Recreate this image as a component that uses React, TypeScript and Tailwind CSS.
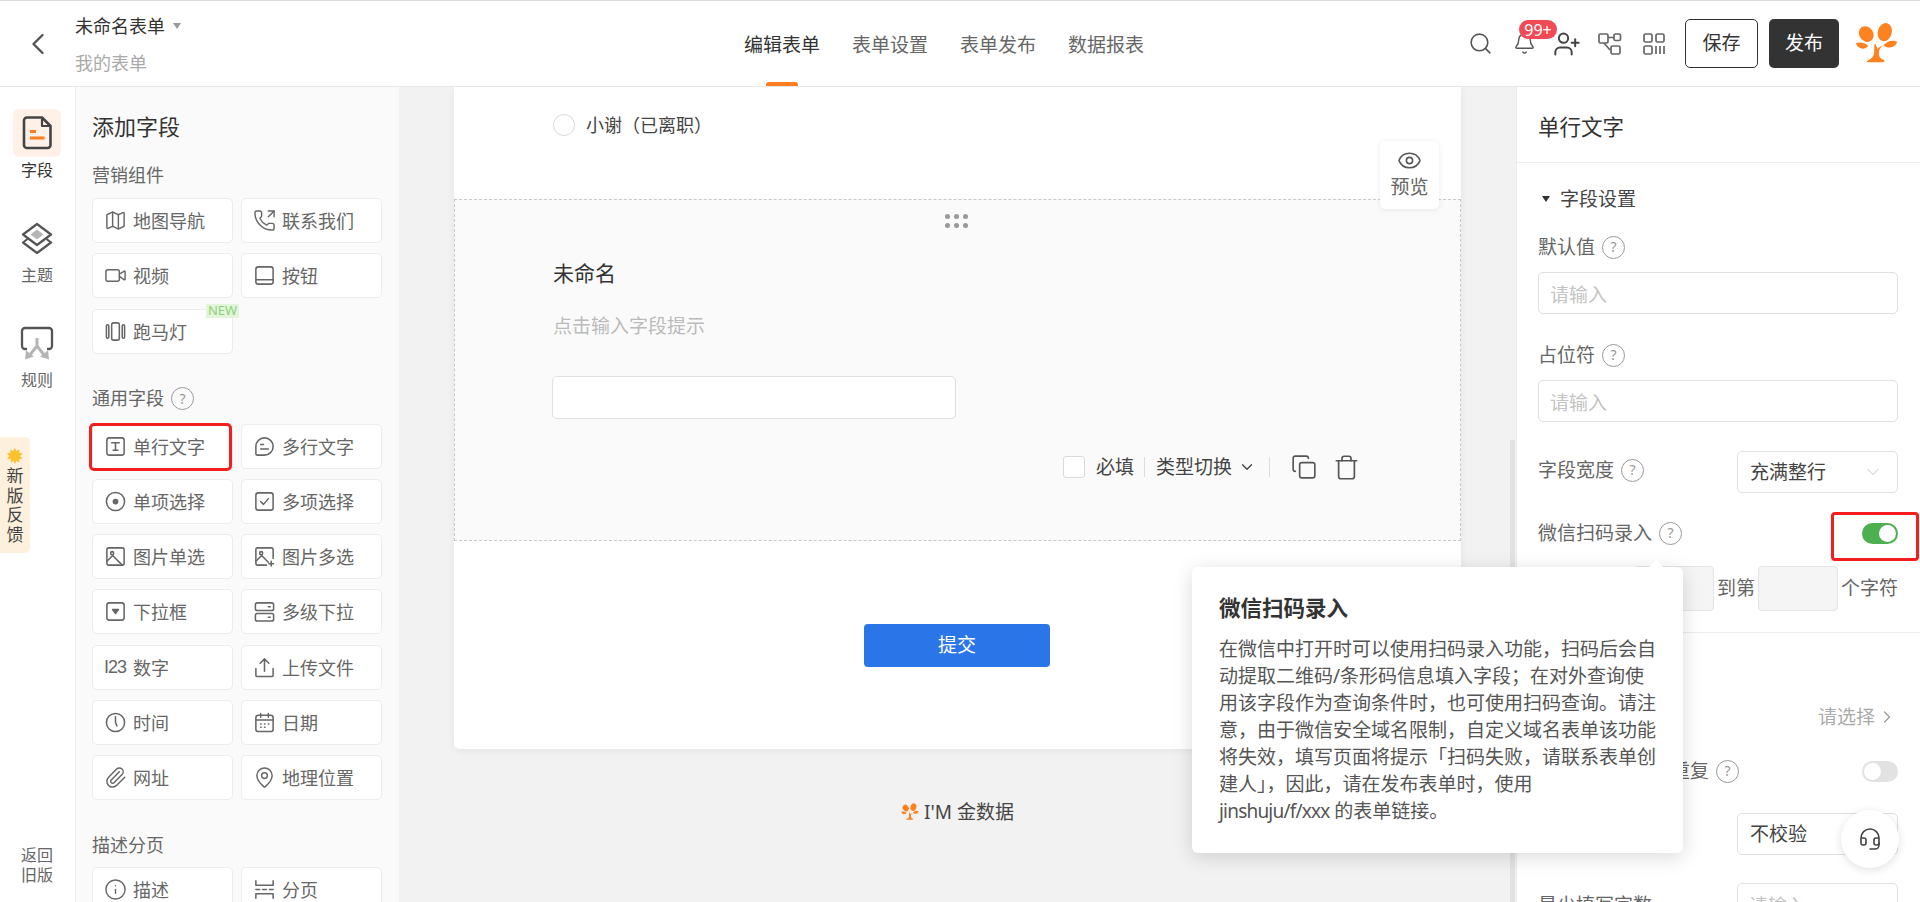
import React from 'react';
import { Bell, ChevronDown, ChevronLeft, ChevronRight, Eye, Headset, Info, Map, MapPin, Paperclip, PhoneOutgoing, Search, UserPlus, Video, Copy, Trash } from 'lucide-react';

function Ic({ children, size = 23, sw = 1.6, color = '#666' }: { children: React.ReactNode; size?: number; sw?: number; color?: string }) {
    return (
        <svg width={size} height={size} viewBox="0 0 24 24" fill="none" stroke={color} strokeWidth={sw} strokeLinecap="round" strokeLinejoin="round" className="shrink-0">
            {children}
        </svg>
    );
}

const lu = { size: 23, strokeWidth: 1.5, color: '#666', className: 'shrink-0' };

const marketing = [
    { label: '地图导航', icon: <Map {...lu} /> },
    { label: '联系我们', icon: <PhoneOutgoing {...lu} /> },
    { label: '视频', icon: <Video {...lu} /> },
    { label: '按钮', icon: <Ic><rect x="3" y="3" width="18" height="18" rx="2.5" /><path d="M3 16.5h18" /></Ic> },
    { label: '跑马灯', icon: <Ic><rect x="8" y="3" width="8" height="18" rx="2" /><rect x="2.5" y="5" width="2.5" height="14" rx="1.2" /><rect x="19" y="5" width="2.5" height="14" rx="1.2" /></Ic>, isNew: true },
];

const common = [
    { label: '单行文字', selected: true, icon: <Ic><rect x="3" y="3" width="18" height="18" rx="2.5" /><path d="M8 8h8M12 8v8M9.5 16h5" /></Ic> },
    { label: '多行文字', icon: <Ic><path d="M12 3a9 9 0 1 1 0 18H4.5A1.5 1.5 0 0 1 3 19.5V12a9 9 0 0 1 9-9z" /><path d="M8 10h3M8 14.5h8" /></Ic> },
    { label: '单项选择', icon: <Ic><circle cx="12" cy="12" r="9.5" /><circle cx="12" cy="12" r="3" fill="#666" stroke="none" /></Ic> },
    { label: '多项选择', icon: <Ic><rect x="3" y="3" width="18" height="18" rx="2.5" /><path d="M8 12l3 3 5-6" /></Ic> },
    { label: '图片单选', icon: <Ic><rect x="3" y="3" width="18" height="18" rx="2" /><circle cx="8.5" cy="8.5" r="1.6" /><path d="M3 17l6-6 10 10" /></Ic> },
    { label: '图片多选', icon: <Ic><path d="M14 21H5a2 2 0 0 1-2-2V5a2 2 0 0 1 2-2h14a2 2 0 0 1 2 2v9" /><circle cx="8.5" cy="8.5" r="1.6" /><path d="M3 17l6-6 7 7M19 17v5M16.500 19.500h5" /></Ic> },
    { label: '下拉框', icon: <Ic><rect x="3" y="3" width="18" height="18" rx="2.5" /><path d="M9 10h6l-3 4z" fill="#666" /></Ic> },
    { label: '多级下拉', icon: <Ic><rect x="2.500" y="3" width="19" height="8" rx="2" /><rect x="2.500" y="14" width="19" height="8" rx="2" /><path d="M16 7h2M16 18h2" /></Ic> },
    { label: '数字', icon: <span className="w-[23px] shrink-0 text-[18px] leading-none tracking-[-1px] text-[#666] font-['Liberation_Sans',sans-serif]">I23</span> },
    { label: '上传文件', icon: <Ic><path d="M12 16V3M7.500 7.500L12 3l4.500 4.500M3 13v7a1.500 1.500 0 0 0 1.500 1.500h15A1.500 1.500 0 0 0 21 20v-7" /></Ic> },
    { label: '时间', icon: <Ic><circle cx="12" cy="12" r="9.500" /><path d="M12 6v6l1.500 3.500" /></Ic> },
    { label: '日期', icon: <Ic><rect x="3" y="4.500" width="18" height="17" rx="2.500" /><path d="M3 9.500h18M8 2.500v4M16 2.500v4M8 13.500h.5M12 13.500h.5M16 13.500h.5M8 17h.5M12 17h.5" /></Ic> },
    { label: '网址', icon: <Paperclip {...lu} /> },
    { label: '地理位置', icon: <MapPin {...lu} /> },
];

const layout = [
    { label: '描述', icon: <Info {...lu} /> },
    { label: '分页', icon: <Ic><path d="M3 3v4.500h18V3M3 12h4M10 12h4M17 12h4M3 21v-4.500h18V21" /></Ic> },
];

const popLines = [
    '在微信中打开时可以使用扫码录入功能，扫码后会自',
    '动提取二维码/条形码信息填入字段；在对外查询使',
    '用该字段作为查询条件时，也可使用扫码查询。请注',
    '意，由于微信安全域名限制，自定义域名表单该功能',
    '将失效，填写页面将提示「扫码失败，请联系表单创',
    '建人」，因此，请在发布表单时，使用',
];

function FieldButton({ item }: { item: any }) {
    return (
        <div className="relative flex h-[45px] w-[141px] items-center gap-[6px] rounded-[5px] border border-[#ececec] bg-white pl-[11px] text-[18px] text-[#666]">
            {item.icon}
            <span className="whitespace-nowrap pt-[2px]">{item.label}</span>
            {item.isNew && <span className="absolute right-[-7px] top-[-6px] flex h-[14px] w-[33px] items-center justify-center bg-[#e3f6dc] text-[13px] text-[#8ed07a]">NEW</span>}
            {item.selected && <span className="absolute left-[-4px] top-[-2px] h-[48px] w-[143px] rounded-[5px] border-[3px] border-[#f51e1e]" />}
        </div>
    );
}

function FieldGrid({ items, className }: { items: any[]; className: string }) {
    return (
        <div className={`grid grid-cols-[141px_141px] gap-x-[8px] gap-y-[10.3px] ${className}`}>
            {items.map(item => <FieldButton key={item.label} item={item} />)}
        </div>
    );
}

function Help() {
    return <span className="flex h-[23px] w-[23px] shrink-0 items-center justify-center rounded-full border-[1.5px] border-[#999] text-[14px] leading-none text-[#999]">?</span>;
}

function Label({ text, className = '' }: { text: string; className?: string }) {
    return (
        <div className={`flex h-[26px] items-center gap-[7px] text-[19px] text-[#666] ${className}`}>
            <span className="whitespace-nowrap">{text}</span>
            <Help />
        </div>
    );
}

function TextInput({ className = '' }: { className?: string }) {
    return <input readOnly placeholder="请输入" className={`block h-[42px] w-full rounded-[5px] border border-[#e0e0e0] bg-white px-[11px] pt-[3px] text-[19px] outline-none placeholder:text-[#c4c4c4] ${className}`} />;
}

function Toggle({ on }: { on?: boolean }) {
    return (
        <span className={`flex h-[21px] w-[36px] items-center rounded-full px-[2px] ${on ? 'justify-end bg-[#4caf50]' : 'justify-start bg-[#e2e2e2]'}`}>
            <span className="h-[17px] w-[17px] rounded-full bg-white" />
        </span>
    );
}

function RailItem({ label, active, children }: { label: string; active?: boolean; children: React.ReactNode }) {
    return (
        <div className="flex h-[105px] w-full flex-col items-center">
            <div className={`flex h-[48px] w-[48px] items-center justify-center rounded-[6px] ${active ? 'bg-[#fff1e8]' : ''}`}>{children}</div>
            <div className={`mt-[3px] text-[16px] leading-[20px] ${active ? 'text-[#333]' : 'text-[#666]'}`}>{label}</div>
        </div>
    );
}

function Logo({ size }: { size: number }) {
    return (
        <svg width={size} height={size} viewBox="0 0 130 125" fill="#ff8220" className="shrink-0">
            <ellipse cx="34" cy="34" rx="21" ry="25" transform="rotate(-35 34 34)" />
            <ellipse cx="90" cy="28" rx="21" ry="28" transform="rotate(15 90 28)" />
            <path d="M2 62c14-6 30-2 38 8-12 14-30 10-38-8z" />
            <path d="M128 58c-12-8-32-4-42 10 14 12 34 8 42-10z" />
            <path d="M60 62c6 10 8 14 8 18 4-6 8-8 16-12-8 8-12 14-12 24 0 10 4 16 14 20 4 2 4 7-2 7H40c-6 0-6-4 0-6 12-4 18-14 18-26 0-10 0-16 2-25z" />
        </svg>
    );
}

export default function App() {
    return (
        <div className="relative flex h-screen w-full flex-col overflow-hidden bg-white font-['Noto_Sans','Noto_Sans_CJK_SC',sans-serif] text-[#333]">
            {/* Header */}
            <header className="flex h-[87px] shrink-0 items-center border-t border-b border-t-[#dcdcdc] border-b-[#e8e8e8] bg-white">
                <div className="flex w-[744px] items-center">
                    <ChevronLeft size={36} strokeWidth={1.6} color="#555" className="ml-[20px]" />
                    <div className="ml-[19px] pt-[2px]">
                        <div className="flex h-[36px] items-center text-[18px] text-[#333]">
                            未命名表单
                            <span className="ml-[8px] mb-[1px] h-0 w-0 border-x-[4px] border-t-[6px] border-x-transparent border-t-[#999]" />
                        </div>
                        <div className="h-[36px] text-[18px] leading-[36px] text-[#aaa]">我的表单</div>
                    </div>
                </div>
                <nav className="flex h-full items-center gap-[32px] pt-[4px] text-[19px] text-[#666]">
                    <div className="relative flex h-full items-center text-[#333]">
                        编辑表单
                        <span className="absolute bottom-0 left-[22px] h-[4px] w-[32px] rounded-t-[3px] bg-[#ff7d1f]" />
                    </div>
                    <div>表单设置</div>
                    <div>表单发布</div>
                    <div>数据报表</div>
                </nav>
                <div className="ml-auto flex items-center pr-[22px]">
                    <Search size={25} strokeWidth={1.5} color="#555" />
                    <div className="relative ml-[20px]">
                        <Bell size={23} strokeWidth={1.5} color="#555" />
                        <span className="absolute left-[6px] top-[-12px] flex h-[19px] w-[38px] items-center justify-center rounded-full bg-[#f04a55] text-[16px] leading-none text-white">99+</span>
                    </div>
                    <UserPlus size={28} strokeWidth={1.7} color="#444" className="ml-[17px]" />
                    <svg width="24" height="24" viewBox="0 0 24 24" fill="none" stroke="#666" strokeWidth="1.7" strokeLinejoin="round" className="ml-[17px]">
                        <rect x="1" y="2" width="9" height="9" rx="1.5" />
                        <rect x="16" y="2" width="6.5" height="6.5" rx="1.5" />
                        <rect x="13" y="14" width="9" height="8" rx="1.5" />
                        <path d="M6 11l6 7M10 5.5h6" />
                    </svg>
                    <svg width="22" height="22" viewBox="0 0 22 22" fill="none" stroke="#666" strokeWidth="1.7" className="ml-[21px]">
                        <rect x="1" y="1" width="8" height="8" rx="1.5" />
                        <rect x="13" y="1" width="8" height="8" rx="1.5" />
                        <rect x="1" y="13" width="8" height="8" rx="1.5" />
                        <path d="M13 13v8M17 13v8M21 13v8" />
                    </svg>
                    <button className="ml-[20px] flex h-[49px] w-[73px] items-center justify-center rounded-[5px] border border-[#333] bg-white text-[19px] text-[#333]">保存</button>
                    <button className="ml-[11px] flex h-[49px] w-[70px] items-center justify-center rounded-[5px] bg-[#333] text-[19px] text-white">发布</button>
                    <div className="ml-[16px]"><Logo size={43} /></div>
                </div>
            </header>

            <div className="flex min-h-0 flex-1">
                {/* Left rail */}
                <aside className="relative flex w-[76px] shrink-0 flex-col items-center border-r border-[#ececec] bg-white pr-[1px] pt-[22px]">
                    <RailItem label="字段" active>
                        <svg width="30" height="34" viewBox="0 0 30 34" fill="none">
                            <path d="M5 1.500h15l8.500 8.500v19a3 3 0 0 1-3 3H5a3 3 0 0 1-3-3V4.500a3 3 0 0 1 3-3z" stroke="#444" strokeWidth="2.6" strokeLinejoin="round" />
                            <path d="M20 1.500v8.500h8.500" stroke="#444" strokeWidth="2.200" strokeLinejoin="round" />
                            <path d="M8 14h6v3H8zM8 20.500h14.500v3H8z" fill="#ff7d1f" />
                        </svg>
                    </RailItem>
                    <RailItem label="主题">
                        <svg width="32" height="32" viewBox="0 0 32 32" fill="none">
                            <path d="M16 7.500l6.500 5-6.500 5-6.500-5z" fill="#b5b5b5" />
                            <path d="M16 2L30 12.500 16 23 2 12.500z" stroke="#555" strokeWidth="2.200" strokeLinejoin="round" />
                            <path d="M6.500 17L2 20.500 16 31l14-10.500L25.500 17" stroke="#555" strokeWidth="2.200" strokeLinejoin="round" />
                        </svg>
                    </RailItem>
                    <RailItem label="规则">
                        <svg width="34" height="34" viewBox="0 0 34 34" fill="none">
                            <path d="M7 23H5a3 3 0 0 1-3-3V5a3 3 0 0 1 3-3h24a3 3 0 0 1 3 3v15a3 3 0 0 1-3 3h-2" stroke="#555" strokeWidth="2.300" />
                            <path d="M17 12v10M17 20L9 30M17 20l8 10" stroke="#b5b5b5" strokeWidth="3" />
                            <path d="M5 33.500l1-9 8 6zM29 33.500l-1-9-8 6z" fill="#b5b5b5" />
                        </svg>
                    </RailItem>
                    <div className="mt-auto pb-[17px] text-center text-[16px] leading-[20px] text-[#666]">返回<br />旧版</div>
                    <div className="absolute left-0 top-[350px] flex h-[116px] w-[30px] flex-col items-center rounded-r-[5px] bg-[#fdf1dd] pt-[11px] text-[17px] leading-[19.5px] text-[#444]">
                        <svg width="16" height="16" viewBox="0 0 16 16" className="mb-[2px] shrink-0">
                            <path d="M8 0l1.500 3 3-1.500-.5 3.300 3.500.7-2.500 2.500 2.500 2.500-3.500.7.5 3.300-3-1.500L8 16l-1.500-3-3 1.500.5-3.300L0 10.500l2.500-2.500L0 5.500l3.500-.7L3 1.500l3 1.500z" fill="#fbc02d" />
                        </svg>
                        <span>新</span><span>版</span><span>反</span><span>馈</span>
                    </div>
                </aside>

                {/* Field list */}
                <aside className="w-[323px] shrink-0 overflow-hidden bg-[#fafafa] pl-[16px] pt-[24px]">
                    <h2 className="h-[30px] text-[22px] leading-[30px] text-[#333]">添加字段</h2>
                    <div className="mt-[21px] h-[26px] text-[18px] leading-[26px] text-[#666]">营销组件</div>
                    <FieldGrid items={marketing} className="mt-[10px]" />
                    <div className="mt-[32px] flex h-[26px] items-center gap-[7px] text-[18px] text-[#666]">通用字段 <Help /></div>
                    <FieldGrid items={common} className="mt-[12px]" />
                    <div className="mt-[32px] h-[26px] text-[18px] leading-[26px] text-[#666]">描述分页</div>
                    <FieldGrid items={layout} className="mt-[9px]" />
                </aside>

                {/* Canvas */}
                <main className="relative min-w-0 flex-1 overflow-hidden bg-[#f2f2f2]">
                    <div className="relative mx-auto w-[1007px] rounded-b-[5px] bg-white pb-[82px] shadow-[0_2px_8px_rgba(0,0,0,0.06)]">
                        <div className="flex h-[112px] items-start gap-[11px] pl-[99px] pt-[25px]">
                            <span className="mt-[2px] h-[22px] w-[22px] rounded-full border border-[#d9d9d9] bg-white" />
                            <span className="text-[18px] leading-[26px] text-[#444]">小谢（已离职）</span>
                        </div>

                        <div className="flex h-[342px] flex-col border border-dashed border-[#c8c8c8] bg-[#fafafa] pl-[98px] pr-[100px]">
                            <div className="ml-[392px] mt-[14px] grid w-[23px] grid-cols-3 gap-[4px]">
                                {[0, 1, 2, 3, 4, 5].map(i => <span key={i} className="h-[5px] w-[5px] rounded-full bg-[#999]" />)}
                            </div>
                            <div className="mt-[30px] text-[21px] leading-[30px] text-[#333]">未命名</div>
                            <div className="mt-[24px] text-[19px] leading-[28px] text-[#bbb]">点击输入字段提示</div>
                            <div className="-ml-px mt-[36px] h-[43px] w-[404px] shrink-0 rounded-[5px] border border-[#e0e0e0] bg-white" />
                            <div className="mt-[34px] flex items-center justify-end text-[19px] text-[#444]">
                                <span className="h-[22px] w-[22px] rounded-[3px] border border-[#d9d9d9] bg-white" />
                                <span className="ml-[11px]">必填</span>
                                <span className="ml-[10px] h-[20px] w-px bg-[#ddd]" />
                                <span className="ml-[11px]">类型切换</span>
                                <ChevronDown size={18} strokeWidth={1.8} color="#444" className="ml-[6px]" />
                                <span className="ml-[13px] h-[20px] w-px bg-[#ddd]" />
                                <Copy size={26} strokeWidth={1.5} color="#555" className="ml-[21px]" />
                                <Trash size={27} strokeWidth={1.5} color="#555" className="ml-[16px]" />
                            </div>
                        </div>

                        <button className="ml-[410px] mt-[83px] flex h-[43px] w-[186px] items-center justify-center rounded-[4px] bg-[#2a76e8] text-[19px] text-white">提交</button>

                        <div className="absolute right-[22px] top-[54px] flex h-[68px] w-[59px] flex-col items-center rounded-[5px] bg-white pt-[7px] text-[19px] leading-[28px] text-[#666] shadow-[0_1px_6px_rgba(0,0,0,0.08)]">
                            <Eye size={25} strokeWidth={1.5} color="#555" />
                            <span>预览</span>
                        </div>
                    </div>
                    <div className="mt-[49px] flex items-center justify-center gap-[5px] text-[19px] leading-[28px] text-[#444]">
                        <Logo size={18} />
                        <span>I'M 金数据</span>
                    </div>
                    <div className="absolute bottom-0 right-[1px] top-[353px] w-[5px] bg-[#e2e2e2]" />
                </main>

                {/* Settings */}
                <aside className="w-[404px] shrink-0 overflow-hidden border-l border-[#ececec] bg-white">
                    <div className="flex h-[76px] items-center border-b border-[#ececec] pl-[21px] pt-[6px] text-[21.5px] text-[#333]">单行文字</div>
                    <div className="pl-[21px] pr-[22px]">
                        <div className="mt-[23px] flex h-[26px] items-center text-[19px] text-[#444]">
                            <span className="ml-[4px] h-0 w-0 border-x-[4px] border-t-[6px] border-x-transparent border-t-[#333]" />
                            <span className="ml-[10px]">字段设置</span>
                        </div>
                        <Label text="默认值" className="mt-[22px]" />
                        <TextInput className="mt-[12px]" />
                        <Label text="占位符" className="mt-[28px]" />
                        <TextInput className="mt-[12px]" />

                        <div className="mt-[29px] flex h-[42px] items-center justify-between">
                            <Label text="字段宽度" className="mb-[4px]" />
                            <div className="flex h-[42px] w-[161px] items-center justify-between rounded-[5px] border border-[#e0e0e0] pl-[12px] pr-[14px] text-[19px] text-[#444]">
                                充满整行
                                <ChevronDown size={20} strokeWidth={1} color="#bbb" />
                            </div>
                        </div>

                        <div className="mt-[27px] flex h-[26px] items-center justify-between">
                            <Label text="微信扫码录入" />
                            <div className="relative">
                                <Toggle on />
                                <span className="absolute left-[-31px] top-[-11px] h-[49px] w-[88px] rounded-[4px] border-[3px] border-[#f51e1e]" />
                            </div>
                        </div>

                        <div className="mt-[20px] flex h-[45px] items-center justify-end text-[19px] text-[#666]">
                            <span className="h-[45px] w-[80px] rounded-[4px] border border-[#e5e5e5] bg-[#f5f5f5]" />
                            <span className="mx-[3px]">到第</span>
                            <span className="h-[45px] w-[80px] rounded-[4px] border border-[#e5e5e5] bg-[#f5f5f5]" />
                            <span className="ml-[3px]">个字符</span>
                        </div>
                    </div>
                    <div className="mt-[21px] border-t border-[#ececec]" />
                    <div className="pl-[21px] pr-[22px]">
                        <div className="mt-[71px] flex h-[26px] items-center justify-end pr-[1px] text-[19px] text-[#aaa]">
                            请选择
                            <ChevronRight size={20} strokeWidth={1.5} color="#999" className="ml-[2px]" />
                        </div>
                        <div className="mt-[28px] flex h-[26px] items-center justify-between">
                            <Label text="不允许填写内容重复" />
                            <Toggle />
                        </div>
                        <div className="mt-[29px] flex h-[42px] items-center justify-end">
                            <div className="flex h-[42px] w-[161px] items-center rounded-[5px] border border-[#e0e0e0] pl-[12px] text-[19px] text-[#444]">不校验</div>
                        </div>
                        <div className="mt-[28px] flex h-[42px] items-start justify-between">
                            <span className="mt-[8px] text-[19px] text-[#666]">最少填写字数</span>
                            <TextInput className="!w-[161px]" />
                        </div>
                    </div>
                </aside>
            </div>

            {/* Popover over the settings column */}
            <div className="absolute left-[1192px] top-[567px] h-[286px] w-[491px] rounded-[6px] bg-white pl-[27px] pt-[26px] shadow-[0_4px_20px_rgba(0,0,0,0.15)]">
                <span className="absolute left-[459px] top-[-5px] h-[10px] w-[10px] rotate-45 bg-white" />
                <div className="text-[21.5px] font-bold leading-[30px] text-[#333]">微信扫码录入</div>
                <div className="mt-[13px] text-[19px] leading-[27px] text-[#555]">
                    {popLines.map(line => <div key={line} className="whitespace-nowrap">{line}</div>)}
                    <div className="whitespace-nowrap"><span className="tracking-[-0.8px]">jinshuju/f/xxx</span> 的表单链接。</div>
                </div>
            </div>

            {/* Support button */}
            <div className="absolute left-[1841px] top-[810px] flex h-[58px] w-[58px] items-center justify-center rounded-full bg-white shadow-[0_2px_10px_rgba(0,0,0,0.12)]">
                <Headset size={24} strokeWidth={1.6} color="#444" />
            </div>
        </div>
    );
}
